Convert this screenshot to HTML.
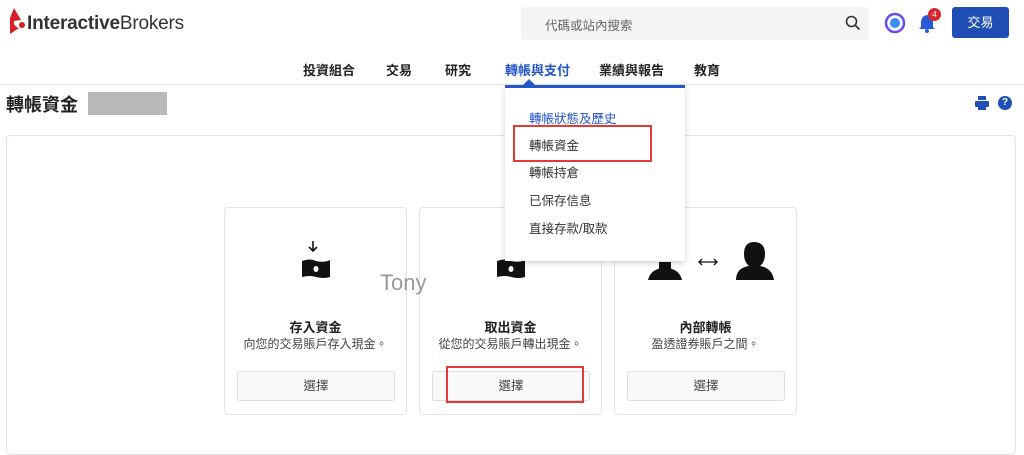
<!DOCTYPE html>
<html><head><meta charset="utf-8"><style>
*{margin:0;padding:0;box-sizing:border-box}
body{width:1024px;height:446px;overflow:hidden;background:#fff;font-family:"Liberation Sans","Noto Sans CJK TC",sans-serif;color:#222;position:relative}
.a{position:absolute}
.nav{font-size:13px;font-weight:bold;top:60px;color:#222}
.card{position:absolute;top:207px;width:183px;height:208px;border:1px solid #e4e4e4;border-radius:4px;text-align:center}
.card .t{position:absolute;top:109px;width:100%;font-size:13px;font-weight:bold}
.card .d{position:absolute;top:127px;width:100%;font-size:12px;color:#444}
.card .b{position:absolute;top:163px;left:12px;width:158px;height:30px;border:1px solid #ddd;border-radius:3px;background:#f9f9f9;font-size:12.5px;color:#444;line-height:28px}
.mi{position:absolute;left:24px;font-size:12.5px;color:#333}
</style></head><body>
<svg class="a" style="left:7px;top:8px" width="18" height="26" viewBox="0 0 18 26"><path d="M7 0 L3 10 L3 26 L12 20 Q6 18 7 13 L14 12 Z" fill="#d81f26"/><circle cx="15" cy="17" r="3" fill="#d81f26"/></svg>
<div class="a" style="left:27px;top:13px;font-size:19px;color:#333;letter-spacing:-0.2px"><b>Interactive</b>Brokers</div>
<div class="a" style="left:521px;top:7px;width:348px;height:33px;background:#f4f4f4;border-radius:3px"></div>
<div class="a" style="left:545px;top:15px;font-size:12.5px;color:#666">代碼或站內搜索</div>
<svg class="a" style="left:845px;top:15px" width="16" height="16" viewBox="0 0 16 16"><circle cx="6.5" cy="6.5" r="5" stroke="#333" stroke-width="1.6" fill="none"/><path d="M10 10 L14.5 14.5" stroke="#333" stroke-width="1.6"/></svg>
<svg class="a" style="left:884px;top:12px" width="22" height="22"><circle cx="11" cy="11" r="9" fill="none" stroke="#6a4cf0" stroke-width="2.5"/><circle cx="11" cy="11" r="5" fill="#3b8cf5"/></svg>
<svg class="a" style="left:918px;top:13px" width="18" height="20"><path d="M9 2 Q3 3 3 10 L3 14 L1 16 L17 16 L15 14 L15 10 Q15 3 9 2Z" fill="#2a5bd6"/><circle cx="9" cy="18" r="2" fill="#2a5bd6"/></svg>
<div class="a" style="left:928px;top:8px;width:13px;height:13px;border-radius:50%;background:#d8262c;color:#fff;font-size:8px;text-align:center;line-height:13px">4</div>
<div class="a" style="left:952px;top:7px;width:57px;height:31px;background:#1f4fb5;border-radius:3px;color:#fff;font-size:13px;text-align:center;line-height:31px">交易</div>
<div class="a nav" style="left:303px">投資組合</div>
<div class="a nav" style="left:386px">交易</div>
<div class="a nav" style="left:445px">研究</div>
<div class="a nav" style="left:505px;color:#2456c8">轉帳與支付</div>
<div class="a nav" style="left:599px">業績與報告</div>
<div class="a nav" style="left:694px">教育</div>
<div class="a" style="left:0;top:84px;width:1024px;height:1px;background:#e8e8e8"></div>
<div class="a" style="left:6px;top:91px;font-size:18px;font-weight:bold;color:#222">轉帳資金</div>
<div class="a" style="left:88px;top:92px;width:79px;height:23px;background:#b9b9b9"></div>
<svg class="a" style="left:975px;top:96px" width="14" height="14"><rect x="3" y="0" width="8" height="4" fill="#1f4fb5"/><rect x="0" y="5" width="14" height="6" rx="1" fill="#1f4fb5"/><rect x="3" y="10" width="8" height="4" fill="#1f4fb5"/></svg>
<div class="a" style="left:998px;top:96px;width:14px;height:14px;border-radius:50%;background:#1f4fb5;color:#fff;font-size:10px;font-weight:bold;text-align:center;line-height:14px">?</div>
<div class="a" style="left:6px;top:135px;width:1010px;height:320px;border:1px solid #e4e4e4;border-radius:4px"></div>
<div class="card" style="left:224px">
<svg class="a" style="left:75px;top:33px" width="34" height="40"><path d="M13 0 V10 M9 6 L13 10 L17 6" stroke="#111" stroke-width="1.6" fill="none"/><path d="M2 20 Q10 17 16 20 Q24 22 30 19 L30 36 Q24 38 16 36 Q10 34 2 36Z" fill="#111"/><ellipse cx="16" cy="28" rx="2.5" ry="3" fill="#fff"/></svg>
<div class="t">存入資金</div><div class="d">向您的交易賬戶存入現金。</div><div class="b">選擇</div></div>
<div class="card" style="left:419px">
<svg class="a" style="left:75px;top:33px" width="34" height="40"><path d="M2 20 Q10 17 16 20 Q24 22 30 19 L30 36 Q24 38 16 36 Q10 34 2 36Z" fill="#111"/><ellipse cx="16" cy="28" rx="2.5" ry="3" fill="#fff"/></svg>
<div class="t">取出資金</div><div class="d">從您的交易賬戶轉出現金。</div><div class="b">選擇</div></div>
<div class="card" style="left:614px">
<svg class="a" style="left:30px;top:34px" width="130" height="42"><path d="M3 38 Q6 26 20 26 Q34 26 37 38Z M14 20 h12 v8 h-12z" fill="#111"/><path d="M110 2 Q100 2 100 14 Q100 22 105 26 Q92 28 92 40 L130 40 Q128 28 116 26 Q121 22 121 14 Q121 2 110 2Z" fill="#111" transform="translate(-1,-2)"/><path d="M54 20 H72 M57 17 L54 20 L57 23 M69 17 L72 20 L69 23" stroke="#111" stroke-width="1.3" fill="none"/></svg>
<div class="t">內部轉帳</div><div class="d">盈透證券賬戶之間。</div><div class="b">選擇</div></div>
<div class="a" style="left:380px;top:270px;font-size:22px;color:#999">Tony</div>
<div class="a" style="left:446px;top:366px;width:138px;height:37px;border:2px solid #e53935"></div>
<div class="a" style="left:505px;top:85px;width:180px;height:176px;background:#fff;box-shadow:0 2px 6px rgba(0,0,0,.18);border-top:3px solid #2456c8">
<div class="a" style="left:18px;top:-9px;width:0;height:0;border-left:6px solid transparent;border-right:6px solid transparent;border-bottom:6px solid #2456c8"></div>
<div class="mi" style="top:20px;color:#2456c8">轉帳狀態及歷史</div>
<div class="mi" style="top:47px">轉帳資金</div>
<div class="mi" style="top:74px">轉帳持倉</div>
<div class="mi" style="top:102px">已保存信息</div>
<div class="mi" style="top:130px">直接存款/取款</div>
</div>
<div class="a" style="left:513px;top:125px;width:139px;height:37px;border:2px solid #e53935"></div>
</body></html>
